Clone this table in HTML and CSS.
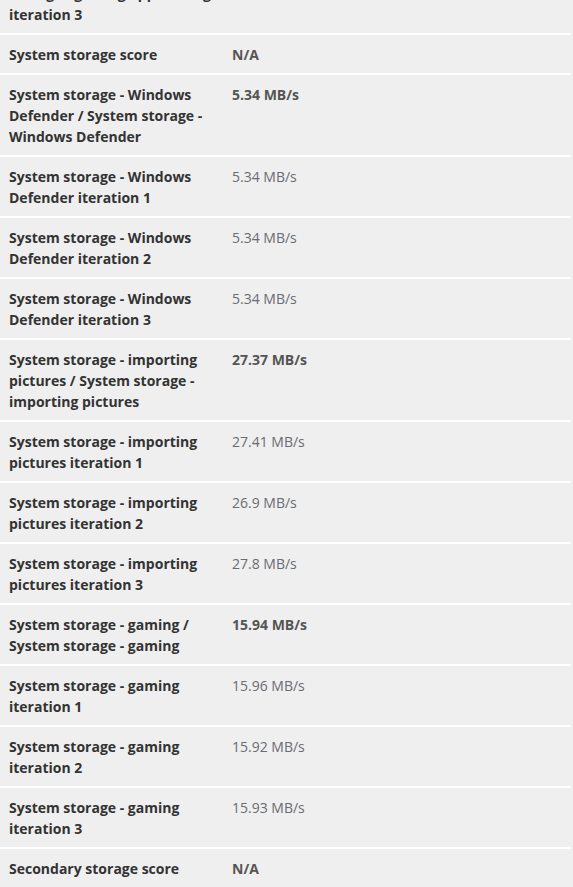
FILE: index.html
```html
<!DOCTYPE html>
<html>
<head>
<meta charset="utf-8">
<link rel="stylesheet" href="styles.css">
</head>
<body>
<div class="table">
  <div class="row">
    <div class="label">Storage - gaming app loading iteration 3</div>
    <div class="value">5.27 MB/s</div>
  </div>
  <div class="row">
    <div class="label">System storage score</div>
    <div class="value strong">N/A</div>
  </div>
  <div class="row">
    <div class="label">System storage - Windows Defender / System storage - Windows Defender</div>
    <div class="value strong">5.34 MB/s</div>
  </div>
  <div class="row">
    <div class="label">System storage - Windows Defender iteration 1</div>
    <div class="value">5.34 MB/s</div>
  </div>
  <div class="row">
    <div class="label">System storage - Windows Defender iteration 2</div>
    <div class="value">5.34 MB/s</div>
  </div>
  <div class="row">
    <div class="label">System storage - Windows Defender iteration 3</div>
    <div class="value">5.34 MB/s</div>
  </div>
  <div class="row">
    <div class="label">System storage - importing pictures / System storage - importing pictures</div>
    <div class="value strong">27.37 MB/s</div>
  </div>
  <div class="row">
    <div class="label">System storage - importing pictures iteration 1</div>
    <div class="value">27.41 MB/s</div>
  </div>
  <div class="row">
    <div class="label">System storage - importing pictures iteration 2</div>
    <div class="value">26.9 MB/s</div>
  </div>
  <div class="row">
    <div class="label">System storage - importing pictures iteration 3</div>
    <div class="value">27.8 MB/s</div>
  </div>
  <div class="row">
    <div class="label">System storage - gaming / System storage - gaming</div>
    <div class="value strong">15.94 MB/s</div>
  </div>
  <div class="row">
    <div class="label">System storage - gaming iteration 1</div>
    <div class="value">15.96 MB/s</div>
  </div>
  <div class="row">
    <div class="label">System storage - gaming iteration 2</div>
    <div class="value">15.92 MB/s</div>
  </div>
  <div class="row">
    <div class="label">System storage - gaming iteration 3</div>
    <div class="value">15.93 MB/s</div>
  </div>
  <div class="row">
    <div class="label">Secondary storage score</div>
    <div class="value strong">N/A</div>
  </div>
</div>
</body>
</html>
```

FILE: styles.css
```css
html, body {
  margin: 0;
  padding: 0;
  background: #efefef;
}
body {
  font-family: "Open Sans", "Liberation Sans", sans-serif;
  font-size: 14px;
  line-height: 21px;
  overflow: hidden;
}
.table {
  width: 571px;
  margin-top: -26px;
}
.row {
  display: grid;
  grid-template-columns: 223px 1fr;
  border-bottom: 2px solid #ffffff;
}
.label, .value {
  padding: 8.5px 9px 8.5px 9px;
}
.label {
  font-weight: 700;
  color: #333333;
}
.value {
  color: #6b6b72;
}
.value.strong {
  font-weight: 700;
  color: #555555;
}
```
